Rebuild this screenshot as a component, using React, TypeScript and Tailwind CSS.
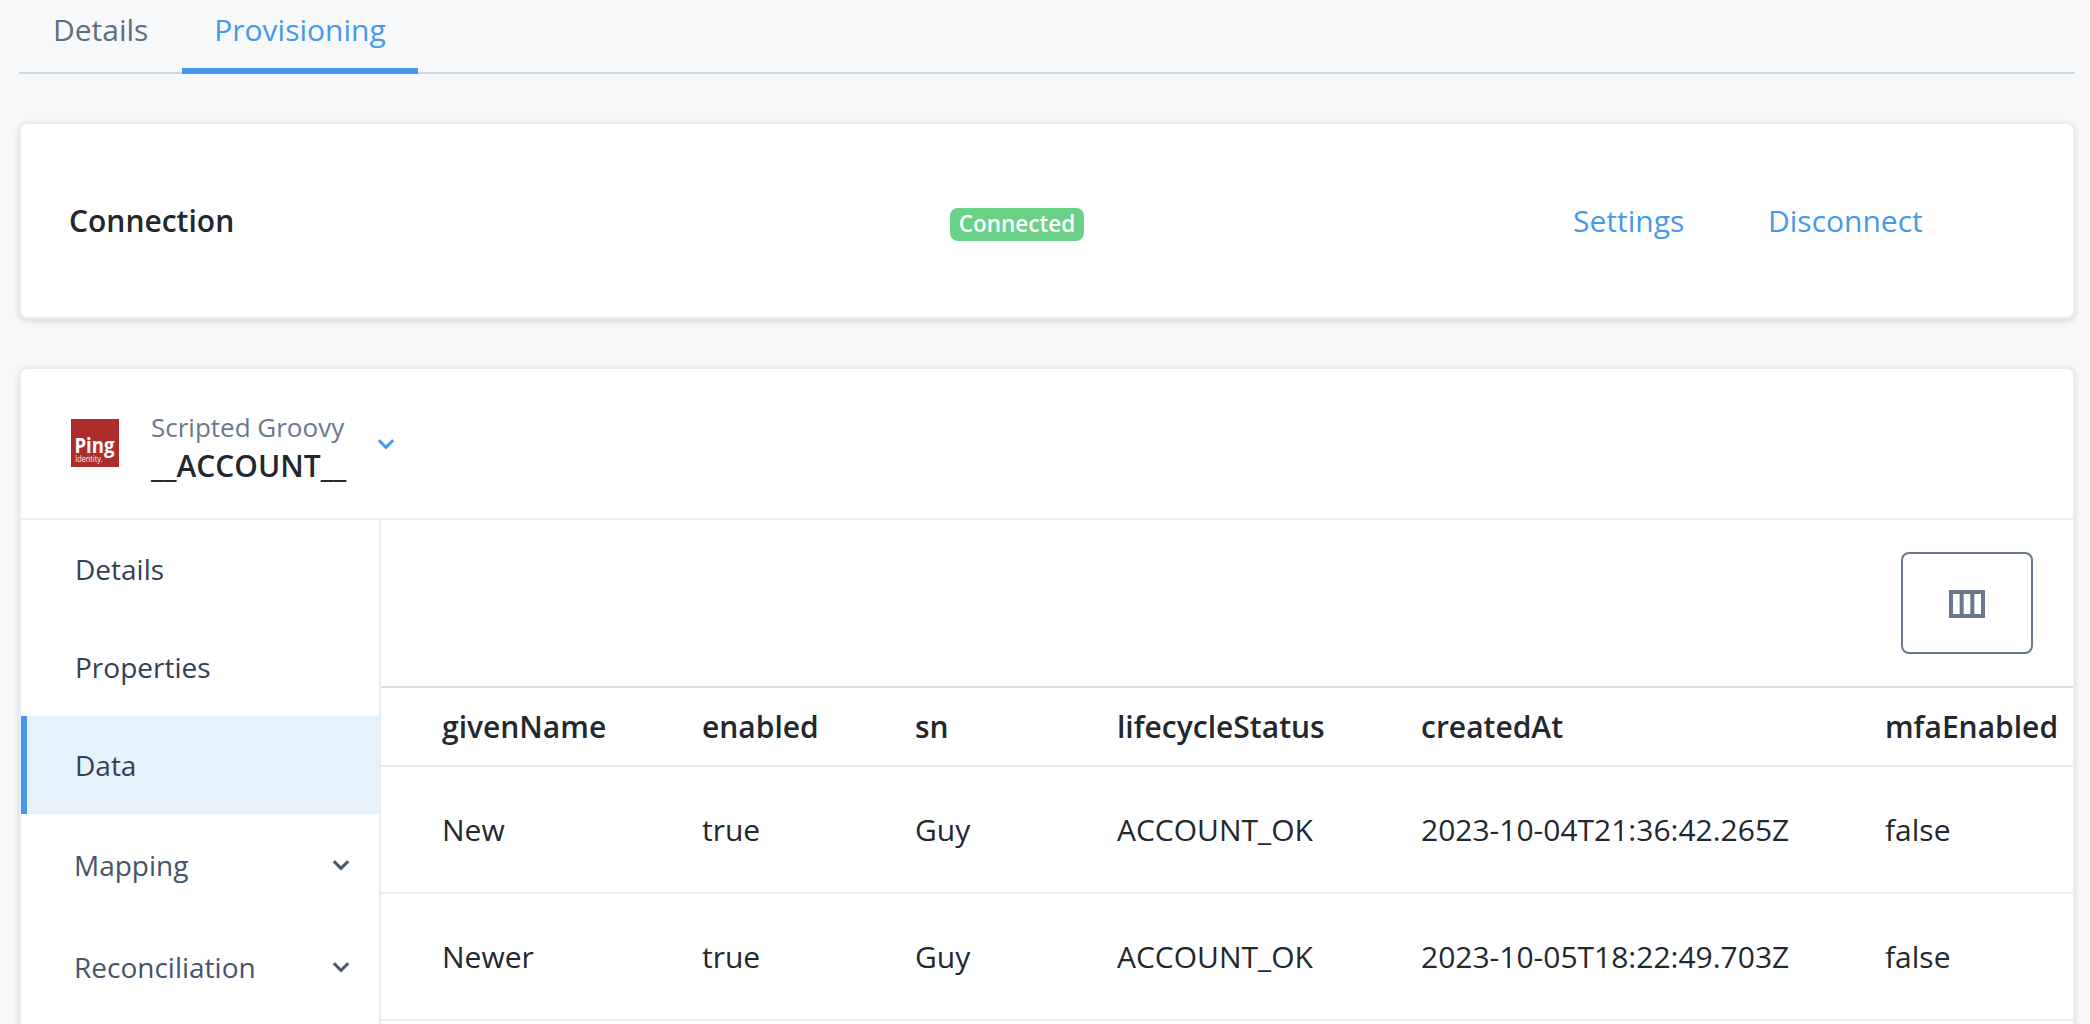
import React from "react";

const columns = ["givenName", "enabled", "sn", "lifecycleStatus", "createdAt", "mfaEnabled"];

const rows = [
  ["New", "true", "Guy", "ACCOUNT_OK", "2023-10-04T21:36:42.265Z", "false"],
  ["Newer", "true", "Guy", "ACCOUNT_OK", "2023-10-05T18:22:49.703Z", "false"],
];

const rowGrid = "grid grid-cols-[260px_213px_202px_304px_464px_1fr] items-center whitespace-nowrap pl-[61px]";

function Chevron({ className }: { className: string }) {
  return (
    <svg viewBox="0 0 24 24" fill="currentColor" className={`size-8 shrink-0 ${className}`}>
      <path
        d="M7.41 8.59 12 13.17l4.59-4.58L18 10l-6 6-6-6z"
        stroke="currentColor"
        strokeWidth="0.4"
        strokeLinejoin="round"
      />
    </svg>
  );
}

function PingLogo() {
  return (
    <svg viewBox="0 0 48 48" className="-mt-[2px] size-12 shrink-0 overflow-visible">
      <rect width="48" height="48" fill="#ad2d2d" />
      <text x="3.4" y="34.2" fontSize="20.5" fontWeight="700" textLength="40" lengthAdjust="spacingAndGlyphs" fill="#fff">
        Ping
      </text>
      <text x="4.2" y="42.8" fontSize="8.4" textLength="27.6" lengthAdjust="spacingAndGlyphs" fill="#fbeaea">
        Identity.
      </text>
    </svg>
  );
}

function NavItem({ label, active }: { label: string; active?: boolean }) {
  return (
    <a
      className={`flex h-[98px] items-center border-l-[6px] pl-12 text-[#324055] ${
        active ? "border-[#4699ea] bg-[#e5f2fc]" : "border-transparent"
      }`}
    >
      {label}
    </a>
  );
}

function NavGroup({ label }: { label: string }) {
  return (
    <a className="flex h-[102px] items-center justify-between pl-[53px] pr-[22px] text-[#455469]">
      {label}
      <Chevron className="text-[#455469]" />
    </a>
  );
}

export default function App() {
  return (
    <div className="h-[1024px] w-[2090px] overflow-hidden bg-[#f6f8fa] pl-[19px] pr-[15px] font-['Open_Sans',sans-serif] text-[30px] leading-[45px] text-[#23282e]">
      <nav className="flex h-[74px] items-end border-b-2 border-[#d1d9e0]">
        <a className="-mb-[2px] h-[67px] w-[163px] pl-[34px] text-[#5e6d82]">Details</a>
        <a className="-mb-[2px] h-[67px] w-[236px] border-b-[6px] border-[#4699ea] text-center text-[#4699ea]">
          Provisioning
        </a>
      </nav>

      <section className="mt-12 flex h-[197px] items-center rounded-lg border-2 border-[#e7edf3] bg-white shadow-[0_2px_6px_rgba(0,0,0,0.14)]">
        <h2 className="w-[929px] pl-12 font-semibold">Connection</h2>
        <span className="mt-[7px] flex h-[33px] w-[134px] items-center justify-center rounded-lg bg-[#69d286] text-[22.5px] font-semibold leading-none text-white">
          Connected
        </span>
        <a className="ml-[489px] w-[195px] text-[#4699ea]">Settings</a>
        <a className="text-[#4699ea]">Disconnect</a>
      </section>

      <section className="mt-12 flex h-[700px] flex-col rounded-lg border-2 border-[#e7edf3] bg-white shadow-[0_2px_6px_rgba(0,0,0,0.14)]">
        <header className="flex h-[151px] items-center border-b-2 border-[#e7edf3] pl-[50px]">
          <PingLogo />
          <div className="ml-8 w-[200px] pt-[5px]">
            <div className="text-[26px] leading-[39px] text-[#69788b]">Scripted Groovy</div>
            <div className="leading-[38px] font-semibold">__ACCOUNT__</div>
          </div>
          <Chevron className="ml-[19px] text-[#4699ea]" />
        </header>

        <div className="flex flex-1">
          <aside className="w-[360px] shrink-0 border-r-2 border-[#e7edf3] text-[28px]">
            <NavItem label="Details" />
            <NavItem label="Properties" />
            <NavItem label="Data" active />
            <NavGroup label="Mapping" />
            <NavGroup label="Reconciliation" />
          </aside>

          <main className="min-w-0 flex-1">
            <div className="flex h-[166px] items-center justify-end pr-10">
              <button className="flex h-[102px] w-[132px] items-center justify-center rounded-lg border-2 border-[#69788b] pt-[2px] text-[#69788b]">
                <svg viewBox="0 0 24 24" fill="currentColor" className="size-12">
                  <path d="M3 5v14h18V5H3zm5.33 12H5V7h3.33v10zm5.34 0h-3.33V7h3.33v10zM19 17h-3.33V7H19v10z" />
                </svg>
              </button>
            </div>
            <div className={`${rowGrid} h-[81px] border-y-2 border-t-[#dcdddf] border-b-[#e7edf3] font-semibold`}>
              {columns.map((c) => (
                <div key={c}>{c}</div>
              ))}
            </div>
            {rows.map((r) => (
              <div key={r[0]} className={`${rowGrid} h-[127px] border-b-2 border-[#e7edf3]`}>
                {r.map((v, i) => (
                  <div key={i}>{v}</div>
                ))}
              </div>
            ))}
          </main>
        </div>
      </section>
    </div>
  );
}
